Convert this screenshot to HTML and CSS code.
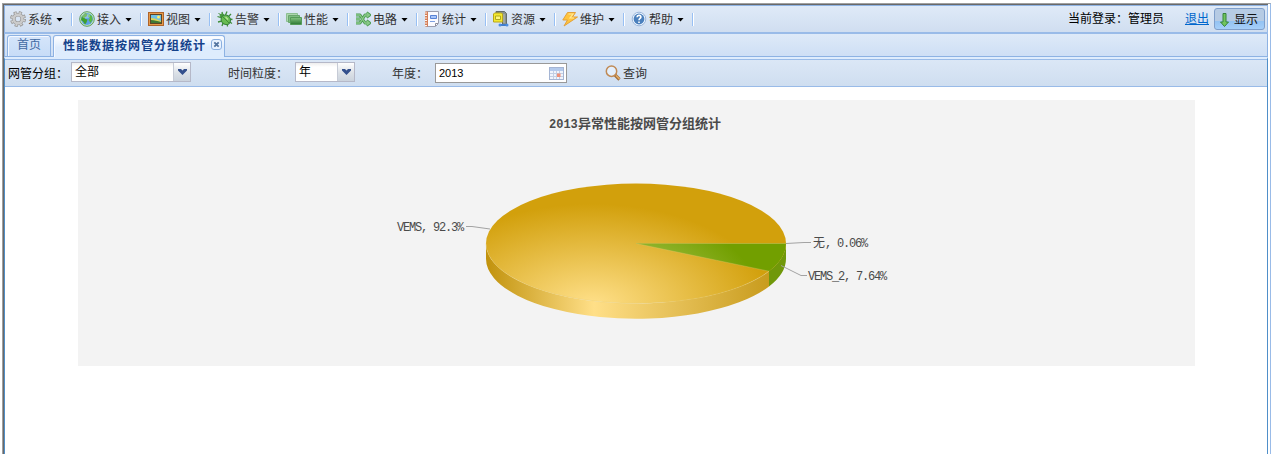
FILE: index.html
```html
<!DOCTYPE html>
<html lang="zh-CN">
<head>
<meta charset="utf-8">
<title>性能数据按网管分组统计</title>
<link rel="stylesheet" href="styles.css">
</head>
<body>
<div class="frame">
<div class="app">
  <header class="menubar">
    <nav class="menu">
      <div class="item"><svg class="icon" viewBox="0 0 16 16"><circle cx="8" cy="8" r="6.400" fill="none" stroke="#9c9c9c" stroke-width="3.200" stroke-dasharray="3 2.027"/><circle cx="8" cy="8" r="4.300" fill="none" stroke="#9c9c9c" stroke-width="3.800"/><circle cx="8" cy="8" r="6.200" fill="none" stroke="#d3d3d3" stroke-width="1.800" stroke-dasharray="1.600 3.270" stroke-dashoffset="-.7"/><circle cx="8" cy="8" r="4.300" fill="none" stroke="#cbcbcb" stroke-width="2.400"/></svg><span class="label">系统</span><i class="arrow"></i><i class="sep"></i></div>
      <div class="item"><svg class="icon" viewBox="0 0 16 16"><circle cx="8" cy="8" r="7.300" fill="#c9ecba" stroke="#5c9a63"/><circle cx="8" cy="8" r="6" fill="#5d9fe6"/><path d="M3 5l3-2.700 2.500.7-1 2.500-2 1 1 1.500 2 .5-1 3-1.500 2-2-3-2-1.500z" fill="#3fa02d"/><path d="M9.500 3l3.500 2 .5 4-2 3-2-3 1.500-2-2-1z" fill="#58b944"/><ellipse cx="7" cy="5" rx="4" ry="2.400" fill="#fff" opacity=".3"/></svg><span class="label">接入</span><i class="arrow"></i><i class="sep"></i></div>
      <div class="item"><svg class="icon" viewBox="0 0 16 16"><rect x=".5" y="1.500" width="15" height="13" fill="#e59a4b" stroke="#b0642a"/><rect x="2.500" y="3.500" width="11" height="9" fill="#6fc0e4" stroke="#5e4526"/><path d="M3 7c4 0 6 1.500 10 3v2H3z" fill="#d7d45b"/><path d="M3 9c4 0 6 1 10 2v1H3z" fill="#3f7836"/><circle cx="10.500" cy="6" r="1.500" fill="#fff16a"/></svg><span class="label">视图</span><i class="arrow"></i><i class="sep"></i></div>
      <div class="item"><svg class="icon" viewBox="0 0 16 16"><path d="M5 1l1 4M10 .5L8.500 4M14 3l-3 3M.5 5.500L5 7M15.500 8.500L12 8M1 11l4-1M15 12.500l-3-2M5 15l1-3M10.500 15.500L10 12" stroke="#3f8e39" stroke-width="1.300" fill="none"/><path d="M1.500 2.500l3 1.500" stroke="#3f8e39"/><circle cx="5" cy="5" r="2.400" fill="#4a9a42"/><ellipse cx="8.800" cy="8.800" rx="4.500" ry="5" transform="rotate(-42 8.800 8.800)" fill="#68bc52" stroke="#37843a"/><path d="M6 6l6 6" stroke="#418f36"/><path d="M8.500 6l2.500 2.500" stroke="#bce59b" stroke-width="1.300"/></svg><span class="label">告警</span><i class="arrow"></i><i class="sep"></i></div>
      <div class="item"><svg class="icon" viewBox="0 0 16 16"><path d="M.5 2.500h11v8H.5z" fill="#add6ae" stroke="#8bbf91"/><path d="M2.500 4.500h11v7h-11z" fill="#7fbc82" stroke="#68a66d"/><path d="M4.500 6.500h11v7h-11z" fill="url(#stack)" stroke="#559b59"/></svg><span class="label">性能</span><i class="arrow"></i><i class="sep"></i></div>
      <div class="item"><svg class="icon" viewBox="0 0 16 16"><g fill="none" stroke-linejoin="round"><path d="M1 4h4l5 8h4M1 12h4l5-8h4M1 8h4M11.500 1.700L14.500 4l-3 2.300M11.500 9.700l3 2.300-3 2.300" stroke="#4a9a50" stroke-width="3"/><path d="M1 4h4l5 8h4M1 12h4l5-8h4M1 8h4M11.500 1.700L14.500 4l-3 2.300M11.500 9.700l3 2.300-3 2.300" stroke="#8aca89" stroke-width="1.300"/></g></svg><span class="label">电路</span><i class="arrow"></i><i class="sep"></i></div>
      <div class="item"><svg class="icon" viewBox="0 0 16 16"><path d="M2.500.5h12v12l-3 3h-9z" fill="#fafaff" stroke="#9a9daf"/><path d="M1 .5h3v15H1z" fill="#d47e58"/><path d="M1 2h2M1 4.500h2M1 7h2M1 9.500h2M1 12h2M1 14.500h2" stroke="#fff3e9"/><path d="M6.500 4.500h6v3h-6z" fill="#a9c6fa" stroke="#5983d5"/><path d="M6 10.500h5" stroke="#7ea0e0"/><path d="M11.500 15v-2.500H14" fill="none" stroke="#8b8d9b"/></svg><span class="label">统计</span><i class="arrow"></i><i class="sep"></i></div>
      <div class="item"><svg class="icon" viewBox="0 0 16 16"><path d="M3 .5h8.500l2 2V14h-4V5L6 2H3z" fill="#88918c" stroke="#656d69"/><path d="M11 3v9" stroke="#b7beb9"/><path d="M.5 3l1-1h7l1 1v8h-9z" fill="#f4ea30" stroke="#b9a619"/><path d="M2.500 5h5v3.500h-5z" fill="#fff87a" stroke="#b0a821"/><path d="M7 14h7" stroke="#3f7dcd" stroke-width="2"/><circle cx="7" cy="14" r="1.500" fill="#4d8de0"/><circle cx="14" cy="14" r="1.500" fill="#4d8de0"/></svg><span class="label">资源</span><i class="arrow"></i><i class="sep"></i></div>
      <div class="item"><svg class="icon" viewBox="0 0 16 16"><path d="M5.500 1.500h8L10.500 6h5L2 15l3.500-6H.8z" fill="#ffc43d" stroke="#e2a03a" stroke-linejoin="round"/><path d="M6.500 3H11L8 7h4" fill="none" stroke="#ffe796" stroke-width="1.200"/></svg><span class="label">维护</span><i class="arrow"></i><i class="sep"></i></div>
      <div class="item"><svg class="icon" viewBox="0 0 16 16"><circle cx="8" cy="8" r="6.800" fill="#eef6ff" stroke="#9bb6db"/><circle cx="8" cy="8" r="5.400" fill="#4b80bd"/><path d="M6 6.200c.2-2.700 4.200-2.200 3.900 0C9.700 7.500 8 7.500 8 9.200M8 10.500V12" fill="none" stroke="#fff" stroke-width="1.600"/></svg><span class="label">帮助</span><i class="arrow"></i><i class="sep"></i></div>
    </nav>
    <div class="login"><span>当前登录：管理员</span><a class="exit">退出</a><button class="show"><svg class="down" viewBox="0 0 10 16"><path d="M3.500 1.500h3v8.500h2.500l-4 4.500-4-4.500h2.500z" fill="#72c45e" stroke="#36843b"/></svg><span>显示</span></button></div>
  </header>
  <div class="tabs">
    <div class="tab">首页</div>
    <div class="tab active"><span>性能数据按网管分组统计</span><svg class="close" viewBox="0 0 11 11"><rect x=".5" y=".5" width="10" height="10" rx="2.500" fill="#e8f2ff" stroke="#8bafdf"/><path d="M3.300 3.300l4.400 4.400M7.700 3.300L3.300 7.700" stroke="#53749f" stroke-width="1.800"/></svg></div>
  </div>
  <main class="panel">
    <form class="filters">
      <label class="group-label">网管分组：</label><div class="combo wide"><span>全部</span><b class="trigger"><svg viewBox="0 0 9 6"><path d="M0 0h3l1.500 1.500L6 0h3v1.500L4.500 6 0 1.500z" fill="#34508c"/></svg></b></div>
      <label class="grain-label">时间粒度：</label><div class="combo small"><span>年</span><b class="trigger"><svg viewBox="0 0 9 6"><path d="M0 0h3l1.500 1.500L6 0h3v1.500L4.500 6 0 1.500z" fill="#34508c"/></svg></b></div>
      <label class="year-label">年度：</label><div class="date"><span>2013</span><svg class="calendar" viewBox="0 0 15 13"><rect x=".5" y=".5" width="14" height="12" fill="#eff4fc" stroke="#a5b5d4"/><path d="M1 1h13v3H1z" fill="#b4caec"/><path d="M1 6.500h13M1 9.500h13M4.500 4v8M7.500 4v8M10.500 4v8" stroke="#c3cfe3"/><path d="M8 6.500h3.500V10H8z" fill="#ee9078"/></svg></div>
      <div class="query"><svg class="icon" viewBox="0 0 16 16"><path d="M10 10l4.500 4.500" stroke="#a06f3c" stroke-width="3.200"/><path d="M11 10.500l3.500 3.500" stroke="#e6ac62" stroke-width="1.500"/><circle cx="6.500" cy="6.200" r="5.200" fill="#e3effc" stroke="#c08a55" stroke-width="1.500"/></svg><span>查询</span></div>
    </form>
    <section class="content">
      <svg class="chart" width="1117" height="266" viewBox="78 100 1117 266">
        <defs>
          <linearGradient id="stack" x2="0" y2="1"><stop stop-color="#86c583"/><stop offset="1" stop-color="#2c7733"/></linearGradient>
          <radialGradient id="gold" gradientUnits="userSpaceOnUse" cx="0" cy="0" r="1" gradientTransform="translate(592 305) scale(180 101)"><stop stop-color="#ffe08a"/><stop offset="1" stop-color="#d2a00c"/></radialGradient>
          <radialGradient id="green" gradientUnits="userSpaceOnUse" cx="0" cy="0" r="1" gradientTransform="translate(592 305) scale(170 101)"><stop stop-color="#c8da80"/><stop offset="1" stop-color="#729f00"/></radialGradient>
          <linearGradient id="rim" gradientUnits="userSpaceOnUse" x1="486" y1="0" x2="786" y2="0"><stop stop-color="#c1920c"/><stop offset=".36" stop-color="#ffdf88"/><stop offset="1" stop-color="#c39513"/></linearGradient>
        </defs>
        <path d="M486 243.500A150 60 0 0 0 769 271.200V286.500A150 60 0 0 1 486 258.500z" fill="url(#rim)"/>
        <path d="M769 271A150 60 0 0 0 786 243.500V258.500A150 60 0 0 1 769 286.500z" fill="#70980a"/>
        <ellipse cx="636" cy="243.500" rx="150" ry="60" fill="url(#gold)"/>
        <path d="M636 243.500H786A150 60 0 0 1 769 271.200z" fill="url(#green)"/>
        <path d="M636 243.500H786" stroke="#b5b741" stroke-width=".8"/>
        <path d="M486 243.500A150 60 0 0 0 769 271.200L636 243.500" fill="none" stroke="#e7cc78" stroke-opacity=".4" stroke-width=".8"/>
        <path d="M466 226.500H472L490 229M786 243.500L804 242.500H811M781 265.500L801 275.500H807" fill="none" stroke="#a3a3a3"/>
        <g class="value">
          <text x="397" y="231" textLength="66">VEMS, 92.3%</text>
          <text x="813" y="247">无<tspan x="825" textLength="42">, 0.06%</tspan></text>
          <text x="808" y="280" textLength="78">VEMS_2, 7.64%</text>
        </g>
        <text class="title" x="549" y="127.500"><tspan class="year">2013</tspan><tspan x="578">异常性能按网管分组统计</tspan></text>
      </svg>
    </section>
  </main>
</div>
</div>
</body>
</html>
```

FILE: styles.css
```css
* { box-sizing: border-box; }
body { margin: 0; padding: 3px 2px 2px; height: 456px; overflow: hidden; background: #fff; font: 12px/16px "Liberation Sans", "Noto Sans CJK SC", sans-serif; color: #333; }
.frame { width: 1269px; height: 451px; border-left: 1px solid #a0a0a0; border-top: 1px solid #a0a0a0; border-right: 1px solid #99bbe8; padding-right: 2px; }
.app { height: 450px; border-left: 1px solid #696969; border-top: 1px solid #696969; }
.menubar { height: 29px; display: flex; justify-content: space-between; border: 1px solid #8db2e3; border-bottom: 2px solid #99bbe8; border-right-color: #99bbe8; background: linear-gradient(#dfeaf8, #d0def0); }
.menu { display: flex; align-items: center; padding-left: 5px; }
.item { width: 69px; display: flex; align-items: center; }
.icon { width: 16px; height: 16px; flex: none; }
.label { width: 24px; margin-left: 2px; padding-top: 1px; white-space: nowrap; }
.arrow { width: 7px; height: 4px; margin: 1px 0 0 4px; background: #000; clip-path: polygon(0 0, 100% 0, 50% 100%); }
.sep { width: 2px; height: 13px; margin-left: 8px; border-left: 1px solid #98c0f4; background: #fff; }
.login { display: flex; align-items: flex-start; padding: 2px 2px 0 0; color: #000; }
.login > span { margin-top: 3px; }
.exit { margin: 3px 5px 0 21px; color: #0066cc; text-decoration: underline; }
.show { width: 51px; height: 22px; padding: 1px 4px 0; display: flex; align-items: center; gap: 4px; border: 1px solid #7f9fcb; border-radius: 3px; background: linear-gradient(#b6cbe4 0 58%, #93c2f2 60%, #a6cff9); font: inherit; color: #111; }
.down { width: 11px; height: 16px; flex: none; }
.show span { white-space: nowrap; }
.tabs { height: 23px; display: flex; align-items: flex-end; gap: 2px; padding: 0 2px; border: 1px solid #8db2e3; border-top: 0; background: linear-gradient(#deeaf8, #cedff5); }
.tab { width: 44px; height: 21px; border: 1px solid #8db2e3; border-bottom: 0; border-radius: 3px 3px 0 0; box-shadow: inset 1px 1px #f3f8ff; background: linear-gradient(#d5e5fa, #c7dcf7); text-align: center; line-height: 18px; color: #416aa3; }
.active { width: 172px; height: 22px; margin-bottom: -1px; padding-left: 9px; display: flex; align-items: center; background: linear-gradient(#fff, #deecfd 55%); font-weight: bold; color: #15428b; }
.active span { letter-spacing: 1px; white-space: nowrap; margin-top: -2px; }
.close { width: 11px; height: 11px; margin-left: 5px; margin-top: -4px; flex: none; }
.panel { height: 397px; border-left: 1px solid #4f8fc9; border-right: 1px solid #4f8fc9; border-top: 2px solid #deecfd; }
.filters { height: 28px; display: flex; align-items: center; border-top: 1px solid #99bbe8; border-bottom: 1px solid #99bbe8; background: linear-gradient(#dbe7f6, #cfdef0); }
.filters label { white-space: nowrap; padding-top: 1px; }
.group-label { width: 66px; padding-left: 3px; color: #000; }
.grain-label { width: 67px; margin-left: 37px; }
.year-label { width: 42px; margin-left: 37px; }
.combo { height: 20px; margin-top: -2px; display: flex; justify-content: space-between; border: 1px solid #b5b8c8; background: linear-gradient(#eee, #fff 4px); color: #000; }
.combo span { padding-left: 3px; line-height: 18px; }
.wide { width: 120px; }
.small { width: 60px; }
.trigger { width: 17px; display: flex; align-items: center; justify-content: center; border-left: 1px solid #c6cbd6; background: linear-gradient(#fff, #dce1e7 55%, #cbd3dd); }
.trigger svg { width: 9px; height: 6px; }
.date { width: 132px; height: 20px; margin-left: 1px; display: flex; align-items: center; justify-content: space-between; border: 1px solid #999; padding: 0 2px 0 3px; background: #fff; color: #000; font-size: 11px; }
.calendar { width: 15px; height: 13px; }
.query { margin-left: 38px; display: flex; align-items: center; gap: 2px; }
.query span { padding-top: 1px; }
.content { padding: 13px 0 0 73px; }
.chart { display: block; background: #f3f3f3; }
.value { font: 12px "Liberation Mono", "Noto Sans CJK SC", monospace; letter-spacing: -1.2px; fill: #4a4a4a; }
.title { font: bold 13px "Noto Sans CJK SC", sans-serif; fill: #4a4a4a; }
.year { font-family: "Liberation Mono", monospace; font-size: 12px; }
```
